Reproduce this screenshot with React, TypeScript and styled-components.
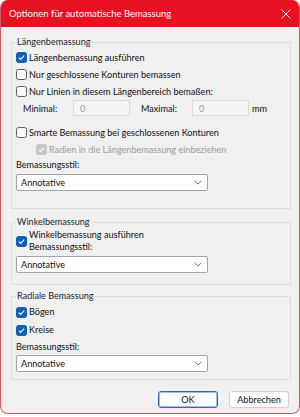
import styled, { createGlobalStyle } from "styled-components"

const GlobalStyle = createGlobalStyle`
  body {
    margin: 0;
    background: #ffffff;
  }
`

const Window = styled.div`
  width: 300px;
  height: 414px;
  box-sizing: border-box;
  border: 1px solid #cf5a66;
  border-top: none;
  border-radius: 8px;
  overflow: hidden;
  background: #f0f0f0;
  font-family: Lato, "Noto Sans", sans-serif;
  font-size: 9.1px;
  color: #111111;
  display: flex;
  flex-direction: column;
`

const TitleBar = styled.div`
  height: 27px;
  flex-shrink: 0;
  background: #e81123;
  color: #ffffff;
  display: flex;
  align-items: center;
  justify-content: space-between;
  padding: 0 8px 0 8px;
  font-size: 9.5px;
`

const Body = styled.div`
  flex: 1;
  display: flex;
  flex-direction: column;
  padding: 8px 8px 0 10px;
`

const Group = styled.fieldset<{ $mt: number; $pb: number }>`
  margin: ${(p) => p.$mt}px 0 0;
  padding: 0 4px ${(p) => p.$pb}px 4px;
  border: 1px solid #dcdcdc;
  min-width: 0;
  display: flex;
  flex-direction: column;
  align-items: flex-start;
`

const Legend = styled.legend`
  padding: 0 1px;
  line-height: 14px;
  color: #262626;
`

const CheckRow = styled.div<{ $indent?: number; $h?: number; $disabled?: boolean }>`
  display: flex;
  align-items: center;
  gap: 2px;
  min-height: ${(p) => p.$h ?? 17}px;
  margin-left: ${(p) => p.$indent ?? 0}px;
  color: ${(p) => (p.$disabled ? "#9d9d9d" : "#111111")};
  line-height: 12px;
`

const Box = styled.span<{ $checked?: boolean; $disabled?: boolean }>`
  width: 11px;
  height: 11px;
  box-sizing: border-box;
  flex-shrink: 0;
  border-radius: 2.5px;
  display: flex;
  align-items: center;
  justify-content: center;
  border: 1px solid
    ${(p) => (p.$disabled ? "#c6c6c6" : p.$checked ? "#0f5fb5" : "#5d5d5d")};
  background: ${(p) => (p.$disabled ? "#c6c6c6" : p.$checked ? "#0f5fb5" : "#fbfbfb")};
`

const RangeRow = styled.div`
  display: flex;
  align-items: center;
  height: 16px;
  padding-left: 7px;
`

const RangeLabel = styled.span<{ $w: number }>`
  width: ${(p) => p.$w}px;
  flex-shrink: 0;
`

const Field = styled.div`
  width: 57px;
  height: 16px;
  box-sizing: border-box;
  border: 1px solid #d9d9d9;
  background: #f4f4f4;
  color: #9a9a9a;
  padding-left: 6px;
  display: flex;
  align-items: center;
  margin-right: 11px;
`

const Unit = styled.span`
  margin-left: -8px;
`

const FieldLabel = styled.div<{ $mt: number }>`
  line-height: 14px;
  margin-top: ${(p) => p.$mt}px;
`

const Select = styled.div<{ $mt: number }>`
  width: 192px;
  height: 17px;
  box-sizing: border-box;
  margin-top: ${(p) => p.$mt}px;
  border: 1px solid #a3a3a3;
  border-radius: 2px;
  background: #ffffff;
  display: flex;
  align-items: center;
  justify-content: space-between;
  padding: 0 5px 0 4px;
`

const Buttons = styled.div`
  display: flex;
  justify-content: flex-end;
  gap: 11px;
  margin-top: 11px;
  padding-right: 2px;
`

const Button = styled.div<{ $primary?: boolean }>`
  width: 60px;
  height: 17px;
  box-sizing: border-box;
  border-radius: 3px;
  border: 1px solid ${(p) => (p.$primary ? "#2f6fae" : "#d0d0d0")};
  box-shadow: ${(p) => (p.$primary ? "inset 0 0 0 1px #9cc0e2" : "none")};
  background: #fdfdfd;
  display: flex;
  align-items: center;
  justify-content: center;
`

function Check({ checked, disabled }: { checked?: boolean; disabled?: boolean }) {
  return (
    <Box $checked={checked} $disabled={disabled}>
      {checked && (
        <svg width="9" height="9" viewBox="0 0 9 9">
          <path d="M1.8 4.7 L3.6 6.4 L7.2 2.6" fill="none" stroke="#fff" strokeWidth="1.1" />
        </svg>
      )}
    </Box>
  )
}

function Chevron() {
  return (
    <svg width="8" height="5" viewBox="0 0 8 5">
      <path d="M0.5 0.8 L4 4 L7.5 0.8" fill="none" stroke="#6a6a6a" strokeWidth="0.9" />
    </svg>
  )
}

export default function App() {
  return (
    <>
      <GlobalStyle />
      <Window>
        <TitleBar>
          <span>Optionen für automatische Bemassung</span>
          <svg width="10" height="10" viewBox="0 0 10 10">
            <path d="M0.5 0.5 L9.5 9.5 M9.5 0.5 L0.5 9.5" stroke="#fff" strokeWidth="1" />
          </svg>
        </TitleBar>

        <Body>
          <Group $mt={0} $pb={17}>
            <Legend>Längenbemassung</Legend>
            <CheckRow>
              <Check checked />
              <span>Längenbemassung ausführen</span>
            </CheckRow>
            <CheckRow>
              <Check />
              <span>Nur geschlossene Konturen bemassen</span>
            </CheckRow>
            <CheckRow>
              <Check />
              <span>Nur Linien in diesem Längenbereich bemaßen:</span>
            </CheckRow>
            <RangeRow>
              <RangeLabel $w={50}>Minimal:</RangeLabel>
              <Field>0</Field>
              <RangeLabel $w={51}>Maximal:</RangeLabel>
              <Field>0</Field>
              <Unit>mm</Unit>
            </RangeRow>
            <CheckRow style={{ marginTop: 8 }}>
              <Check />
              <span>Smarte Bemassung bei geschlossenen Konturen</span>
            </CheckRow>
            <CheckRow $indent={20} $disabled>
              <Check checked disabled />
              <span>Radien in die Längenbemassung einbeziehen</span>
            </CheckRow>
            <FieldLabel $mt={0}>Bemassungsstil:</FieldLabel>
            <Select $mt={2}>
              <span>Annotative</span>
              <Chevron />
            </Select>
          </Group>

          <Group $mt={6} $pb={11}>
            <Legend>Winkelbemassung</Legend>
            <CheckRow $h={24}>
              <Check checked />
              <span>
                Winkelbemassung ausführen
                <br />
                Bemassungsstil:
              </span>
            </CheckRow>
            <Select $mt={3}>
              <span>Annotative</span>
              <Chevron />
            </Select>
          </Group>

          <Group $mt={4} $pb={7}>
            <Legend>Radiale Bemassung</Legend>
            <CheckRow $h={18}>
              <Check checked />
              <span>Bögen</span>
            </CheckRow>
            <CheckRow $h={18}>
              <Check checked />
              <span>Kreise</span>
            </CheckRow>
            <FieldLabel $mt={1}>Bemassungsstil:</FieldLabel>
            <Select $mt={1}>
              <span>Annotative</span>
              <Chevron />
            </Select>
          </Group>

          <Buttons>
            <Button $primary>OK</Button>
            <Button>Abbrechen</Button>
          </Buttons>
        </Body>
      </Window>
    </>
  )
}
